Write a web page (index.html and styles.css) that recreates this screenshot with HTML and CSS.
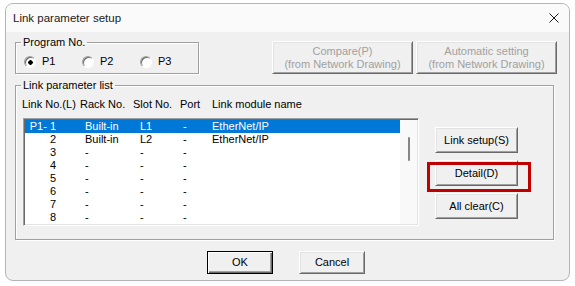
FILE: index.html
```html
<!DOCTYPE html>
<html lang="en">
<head>
  <meta charset="UTF-8">
  <title>Link parameter setup</title>
  <link rel="stylesheet" href="styles.css">
</head>
<body>
  <div class="window">
    <div class="titlebar">
      <span class="title">Link parameter setup</span>
      <svg class="close" width="10" height="10" viewBox="0 0 10 10">
        <path d="M0.5 0.5 L9.5 9.5 M9.5 0.5 L0.5 9.5" stroke="#1b1b1b" stroke-width="1" fill="none"/>
      </svg>
    </div>

    <div class="client">
      <!-- Program selection and network drawing buttons -->
      <div class="top-row">
        <fieldset class="group program">
          <legend>Program No.</legend>
          <div class="radios">
            <label class="radio"><span class="radio-mark checked"></span>P1</label>
            <label class="radio"><span class="radio-mark"></span>P2</label>
            <label class="radio"><span class="radio-mark"></span>P3</label>
          </div>
        </fieldset>
        <button class="btn btn-wide" disabled>Compare(P)<br>(from Network Drawing)</button>
        <button class="btn btn-wide" disabled>Automatic setting<br>(from Network Drawing)</button>
      </div>

      <!-- Link parameter list -->
      <fieldset class="group link-list">
        <legend>Link parameter list</legend>
        <div class="list-area">
          <div class="list-col">
            <div class="list-head">
              <span class="h-no">Link No.(L)</span>
              <span class="h-rack">Rack No.</span>
              <span class="h-slot">Slot No.</span>
              <span class="h-port">Port</span>
              <span class="h-name">Link module name</span>
            </div>
            <div class="listbox">
              <div class="rows">
                <div class="row selected"><span class="c-no">P1- 1</span><span class="c-rack">Built-in</span><span class="c-slot">L1</span><span class="c-port">-</span><span class="c-name">EtherNet/IP</span></div>
                <div class="row"><span class="c-no">2</span><span class="c-rack">Built-in</span><span class="c-slot">L2</span><span class="c-port">-</span><span class="c-name">EtherNet/IP</span></div>
                <div class="row"><span class="c-no">3</span><span class="c-rack">-</span><span class="c-slot">-</span><span class="c-port">-</span><span class="c-name"></span></div>
                <div class="row"><span class="c-no">4</span><span class="c-rack">-</span><span class="c-slot">-</span><span class="c-port">-</span><span class="c-name"></span></div>
                <div class="row"><span class="c-no">5</span><span class="c-rack">-</span><span class="c-slot">-</span><span class="c-port">-</span><span class="c-name"></span></div>
                <div class="row"><span class="c-no">6</span><span class="c-rack">-</span><span class="c-slot">-</span><span class="c-port">-</span><span class="c-name"></span></div>
                <div class="row"><span class="c-no">7</span><span class="c-rack">-</span><span class="c-slot">-</span><span class="c-port">-</span><span class="c-name"></span></div>
                <div class="row"><span class="c-no">8</span><span class="c-rack">-</span><span class="c-slot">-</span><span class="c-port">-</span><span class="c-name"></span></div>
              </div>
              <div class="scrollbar"><div class="thumb"></div></div>
            </div>
          </div>

          <div class="side-buttons">
            <button class="btn btn-side">Link setup(S)</button>
            <div class="marked">
              <button class="btn btn-side">Detail(D)</button>
              <div class="mark"></div>
            </div>
            <button class="btn btn-side">All clear(C)</button>
          </div>
        </div>
      </fieldset>

      <div class="footer-buttons">
        <button class="btn btn-footer btn-default">OK</button>
        <button class="btn btn-footer">Cancel</button>
      </div>
    </div>
  </div>
</body>
</html>
```

FILE: styles.css
```css
/* Classic Win32 dialog look */
body {
  margin: 0;
  padding: 3px 5px;
  background-color: #ffffff;
  font-family: "Liberation Sans", Arial, sans-serif;
  font-size: 11px;
  color: #000;
}
.window {
  width: 565px;
  box-sizing: border-box;
  border: 1px solid #b4b4b4;
  border-radius: 8px;
  overflow: hidden;
  background-color: #f0f0f0;
}
.titlebar {
  height: 28px;
  display: flex;
  align-items: center;
  justify-content: space-between;
  padding: 0 10px 0 7px;
  background-color: #fafafa;
}
.title {
  font-size: 11.5px;
  color: #1a1a1a;
}
.close {
  display: block;
  margin-top: -1px;
}
.client {
  padding: 4px 9px 6px 9px;
}

/* Group boxes */
.group {
  margin: 0;
  box-sizing: border-box;
  min-width: 0;
  border: 1px solid #a0a0a0;
  box-shadow: 1px 1px 0 #fff, inset 1px 1px 0 #fff;
}
.group legend {
  padding: 0 2px;
  line-height: 13px;
}
.top-row {
  display: flex;
  align-items: flex-start;
}
.program {
  width: 184px;
  height: 38px;
  padding: 6px 0 0 8px;
}
.program legend {
  margin-left: -3px;
}
.radios {
  display: flex;
  line-height: 13px;
}
.radio {
  width: 61px;
  display: flex;
  align-items: center;
  gap: 6px;
}
.radio-mark {
  width: 10px;
  height: 10px;
  border-radius: 50%;
  border: 1px solid;
  border-color: #a0a0a0 #fff #fff #a0a0a0;
  box-shadow: inset 1px 1px 0 #696969;
  background-color: #fff;
}
.radio-mark.checked {
  background: radial-gradient(circle at 55% 55%, #000 0, #000 2px, #fff 2.5px);
}

/* Buttons */
.btn {
  font-family: inherit;
  font-size: 11px;
  color: #000;
  background-color: #f0f0f0;
  border: 1px solid;
  border-color: #fff #696969 #696969 #fff;
  box-shadow: inset 1px 1px 0 #e3e3e3, inset -1px -1px 0 #a0a0a0;
  padding: 0;
  box-sizing: border-box;
  line-height: 13px;
}
.btn:disabled {
  color: #a0a0a0;
}
.btn-wide {
  width: 141px;
  height: 33px;
  margin-top: 5px;
  margin-left: 3px;
}
.program + .btn-wide {
  margin-left: 73px;
}

.link-list {
  width: 539px;
  height: 161px;
  margin-top: 5px;
  padding: 6px 0 0 7px;
}
.link-list legend {
  margin-left: -2px;
}
.list-area {
  display: flex;
  align-items: flex-start;
}
.list-head {
  display: flex;
  line-height: 13px;
  margin-left: -1px;
}
.h-no { width: 58px; }
.h-rack { width: 53px; }
.h-slot { width: 47px; }
.h-port { width: 32px; }

.listbox {
  width: 396px;
  height: 108px;
  box-sizing: border-box;
  margin-top: 7px;
  display: flex;
  background-color: #fff;
  border: 1px solid;
  border-color: #a0a0a0 #fff #fff #a0a0a0;
  box-shadow: inset 1px 1px 0 #696969, inset -1px -1px 0 #e3e3e3;
  padding: 1px;
}
.rows {
  flex: 1;
}
.row {
  display: flex;
  height: 13px;
  line-height: 13px;
  white-space: pre;
}
.row.selected {
  background-color: #0078d7;
  color: #fff;
}
.c-no { width: 31px; text-align: right; }
.c-rack { width: 55px; margin-left: 29px; }
.c-slot { width: 43px; }
.c-port { width: 29px; }
.scrollbar {
  width: 17px;
  background-color: #f9f9f9;
  padding-top: 17px;
  box-sizing: border-box;
}
.thumb {
  width: 2px;
  height: 24px;
  margin-left: 8px;
  border-radius: 1px;
  background-color: #868686;
}

.side-buttons {
  margin-left: 16px;
  margin-top: 29px;
  display: flex;
  flex-direction: column;
  gap: 7px;
}
.btn-side {
  width: 83px;
  height: 26px;
  display: block;
}
.marked {
  position: relative;
}
/* Red annotation frame drawn over the Detail button */
.mark {
  position: absolute;
  left: -8px;
  top: 2px;
  width: 104px;
  height: 30px;
  box-sizing: border-box;
  border: 3px solid #c00000;
}

.footer-buttons {
  display: flex;
  justify-content: center;
  gap: 26px;
  margin-top: 11px;
  padding-right: 3px;
}
.btn-footer {
  width: 66px;
  height: 23px;
}
.btn-default {
  border: 1px solid #000;
  box-shadow: inset 1px 1px 0 #fff, inset -1px -1px 0 #696969, inset -2px -2px 0 #a0a0a0;
}
```
